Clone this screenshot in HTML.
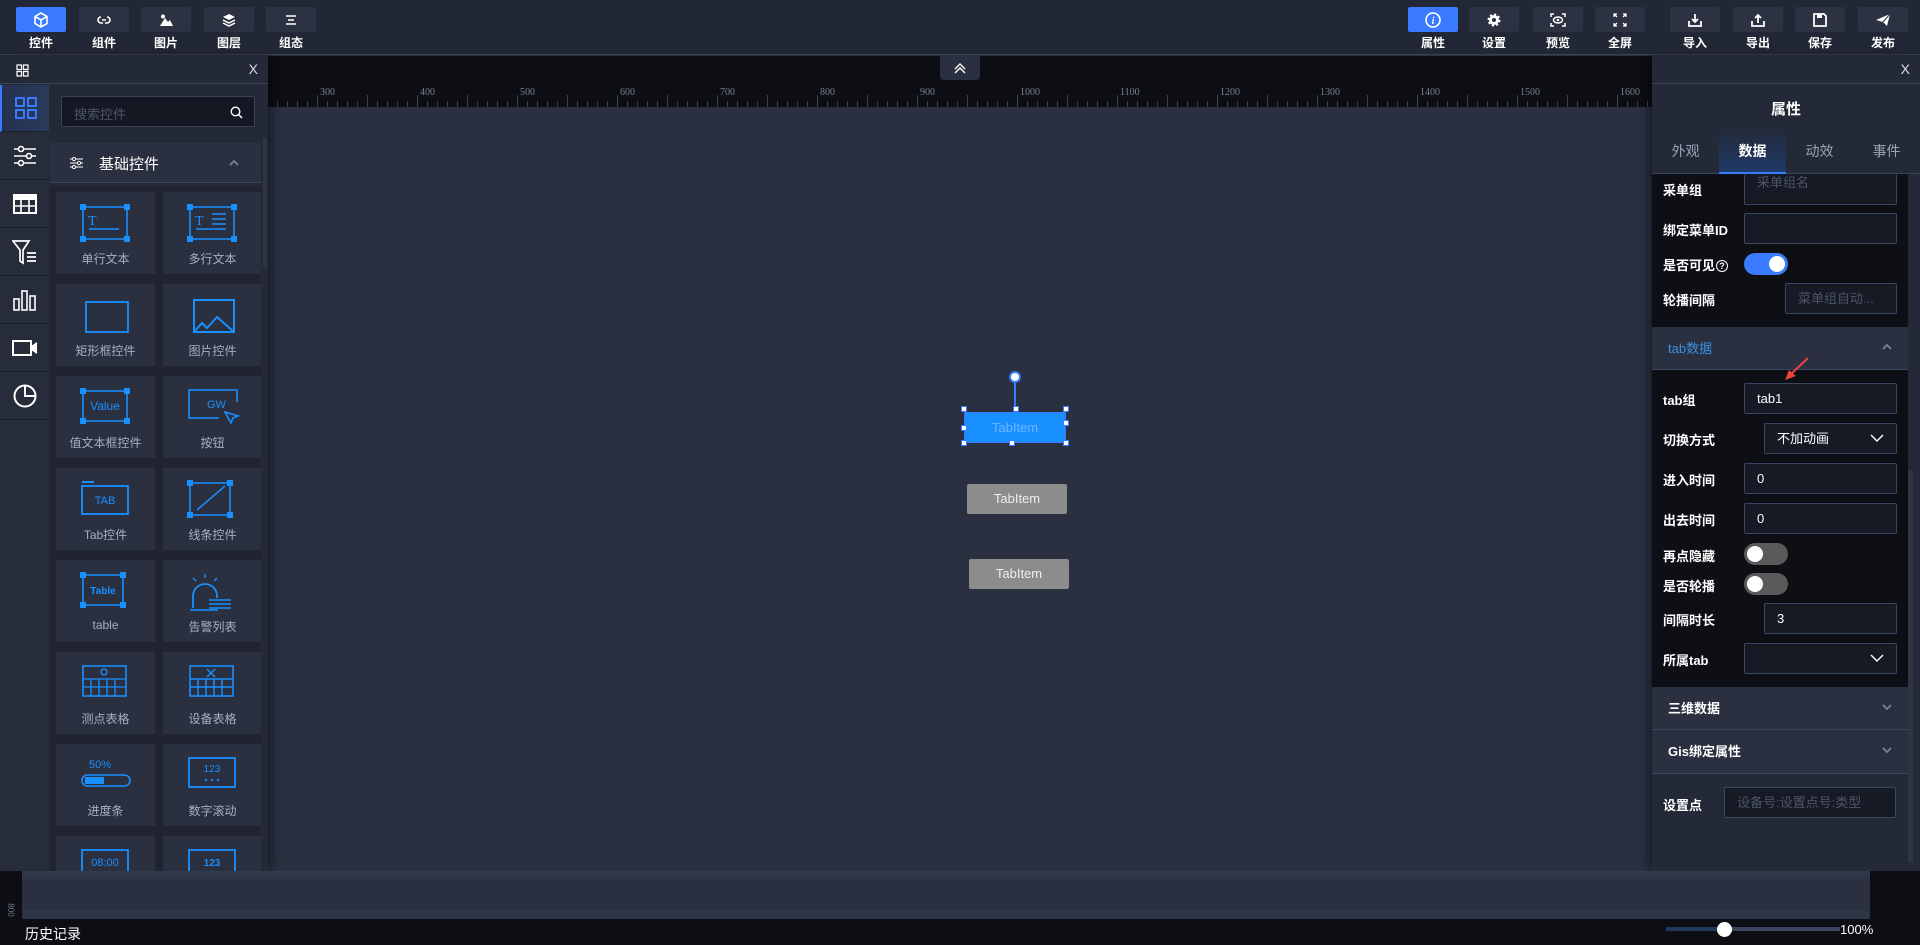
<!DOCTYPE html>
<html><head><meta charset="utf-8"><style>
*{box-sizing:border-box;margin:0;padding:0}
body{width:1920px;height:945px;overflow:hidden;background:#2a3040;font-family:"Liberation Sans","Noto Sans CJK SC",sans-serif;position:relative;color:#fff}
.abs{position:absolute}
#top{left:0;top:0;width:1920px;height:55px;background:#222735;border-bottom:1px solid #3a4358}
.tb{position:absolute;top:7px;width:50px;height:25px;background:#2c3241;border-radius:2px;display:flex;align-items:center;justify-content:center}
.tb.on{background:#3a7afe}
.tl{position:absolute;top:34px;width:50px;text-align:center;font-size:12px;font-weight:bold;color:#fff}
#ruler{left:268px;top:56px;width:1384px;height:51px;background:#0c0e13}
.rl{position:absolute;top:31px;font-family:"Liberation Serif",serif;font-size:10px;color:#7a8090}
#lp{left:0;top:56px;width:268px;height:815px;background:#232937;box-shadow:4px 0 8px rgba(0,0,0,.4)}
#rp{left:1652px;top:56px;width:268px;height:815px;background:#232937;box-shadow:-4px 0 8px rgba(0,0,0,.4)}
.card{position:absolute;width:99px;height:82px;background:#2a3040}
.card span{position:absolute;left:0;right:0;top:58px;text-align:center;font-size:12px;color:#a6afc0}
.card svg{position:absolute;left:24px;top:12px}
.ic{position:absolute;left:0;width:49px;height:47px;border-bottom:1px solid #1c2029;display:flex;align-items:center;justify-content:center}
.lab{position:absolute;left:1663px;font-size:13px;font-weight:bold;color:#fff}
.inp{position:absolute;height:31px;background:#161a24;border:1px solid #3a4660;border-radius:2px;font-size:13px;color:#fff;padding-left:12px;line-height:29px}
.ph{color:#4c5466}
.tg{position:absolute;width:44px;height:22px;border-radius:11px;background:#5a5a5a}
.tg i{position:absolute;top:3px;left:3px;width:16px;height:16px;border-radius:50%;background:#fff}
.tg.on{background:#3a7afe}.tg.on i{left:25px}
.sec{position:absolute;left:1652px;width:256px;height:43px;background:#2a3040;border-bottom:1px solid #3a4660;font-size:13px;font-weight:bold;padding-left:16px;line-height:43px}
.chev{position:absolute;right:16px;top:17px}
.h{position:absolute;width:6px;height:6px;background:#fff;border:1px solid #3a7afe}
</style></head><body>
<div id="top" class="abs">
 <div class="tb on" style="left:16px"><svg width="14" height="16" viewBox="0 0 14 16"><path d="M7 1L13 4.5V11.5L7 15L1 11.5V4.5Z M1 4.5L7 8L13 4.5 M7 8V15" fill="none" stroke="#fff" stroke-width="1.6"/></svg></div><div class="tl" style="left:16px">控件</div>
 <div class="tb" style="left:79px"><svg width="14" height="8"><path d="M4 1a3 3 0 100 6h2M10 1a3 3 0 110 6h-2M5 4h4" fill="none" stroke="#fff" stroke-width="1.6"/></svg></div><div class="tl" style="left:79px">组件</div>
 <div class="tb" style="left:141px"><svg width="14" height="12"><circle cx="4" cy="2.5" r="2" fill="#fff"/><path d="M1 12L6 4l3 4 2-2 3 6z" fill="#fff"/></svg></div><div class="tl" style="left:141px">图片</div>
 <div class="tb" style="left:204px"><svg width="14" height="14"><path d="M7 1l6 3-6 3-6-3z" fill="#fff"/><path d="M1 7l6 3 6-3M1 10l6 3 6-3" fill="none" stroke="#fff" stroke-width="1.5"/></svg></div><div class="tl" style="left:204px">图层</div>
 <div class="tb" style="left:266px"><svg width="12" height="10"><path d="M1 1h10M3 5h6M1 9h10" stroke="#fff" stroke-width="1.5"/></svg></div><div class="tl" style="left:266px">组态</div>

 <div class="tb on" style="left:1408px"><svg width="16" height="16"><circle cx="8" cy="8" r="7" fill="none" stroke="#fff" stroke-width="1.6"/><text x="8" y="12" font-size="10" font-style="italic" font-weight="bold" fill="#fff" text-anchor="middle" font-family="Liberation Serif">i</text></svg></div><div class="tl" style="left:1408px">属性</div>
 <div class="tb" style="left:1469px"><svg width="14" height="14"><circle cx="7" cy="7" r="5" fill="#fff" stroke="#fff" stroke-width="3" stroke-dasharray="2 1.9"/><circle cx="7" cy="7" r="2" fill="#2c3241"/></svg></div><div class="tl" style="left:1469px">设置</div>
 <div class="tb" style="left:1533px"><svg width="16" height="14"><path d="M1 4V1h3M12 1h3v3M15 10v3h-3M4 13H1v-3" fill="none" stroke="#fff" stroke-width="1.5"/><ellipse cx="8" cy="7" rx="4.5" ry="3" fill="none" stroke="#fff" stroke-width="1.4"/><circle cx="8" cy="7" r="1.3" fill="#fff"/></svg></div><div class="tl" style="left:1533px">预览</div>
 <div class="tb" style="left:1595px"><svg width="14" height="14"><path d="M1 4V1h3M1 1l3 3M10 1h3v3M13 1l-3 3M13 10v3h-3M13 13l-3-3M4 13H1v-3M1 13l3-3" fill="none" stroke="#fff" stroke-width="1.3"/></svg></div><div class="tl" style="left:1595px">全屏</div>
 <div class="tb" style="left:1670px"><svg width="14" height="14"><path d="M1 8v5h12V8M7 1v8M4 6l3 3 3-3" fill="none" stroke="#fff" stroke-width="1.8"/></svg></div><div class="tl" style="left:1670px">导入</div>
 <div class="tb" style="left:1733px"><svg width="14" height="14"><path d="M1 8v5h12V8M7 10V2M4 5l3-3 3 3" fill="none" stroke="#fff" stroke-width="1.8"/></svg></div><div class="tl" style="left:1733px">导出</div>
 <div class="tb" style="left:1795px"><svg width="14" height="14"><path d="M1 1h10l2 2v10H1z" fill="none" stroke="#fff" stroke-width="1.8"/><rect x="4" y="1" width="5" height="4" fill="#fff"/></svg></div><div class="tl" style="left:1795px">保存</div>
 <div class="tb" style="left:1858px"><svg width="16" height="14"><path d="M1 7L15 1 12 13 8 9z" fill="#fff"/><path d="M8 9L15 1" stroke="#2c3241" stroke-width="1"/></svg></div><div class="tl" style="left:1858px">发布</div>
</div>

<div id="ruler" class="abs">
 <div class="rl" style="left:52px">300</div><div class="rl" style="left:152px">400</div><div class="rl" style="left:252px">500</div><div class="rl" style="left:352px">600</div><div class="rl" style="left:452px">700</div><div class="rl" style="left:552px">800</div><div class="rl" style="left:652px">900</div><div class="rl" style="left:752px">1000</div><div class="rl" style="left:852px">1100</div><div class="rl" style="left:952px">1200</div><div class="rl" style="left:1052px">1300</div><div class="rl" style="left:1152px">1400</div><div class="rl" style="left:1252px">1500</div><div class="rl" style="left:1352px">1600</div>
 <div class="abs" style="left:0;bottom:0;width:1384px;height:6px;background:repeating-linear-gradient(90deg,transparent 0 9px,#3a404c 9px 10px)"></div>
 <div class="abs" style="left:0;bottom:0;width:1384px;height:12px;background:repeating-linear-gradient(90deg,transparent 0 49px,#3a404c 49px 50px)"></div>
 <div class="abs" style="left:672px;top:0;width:40px;height:24px;background:#2a3040;border-radius:0 0 4px 4px;text-align:center"><svg width="14" height="12" style="margin-top:6px"><path d="M2 7l5-5 5 5M2 11l5-5 5 5" fill="none" stroke="#fff" stroke-width="1.4"/></svg></div>
</div>

<!-- canvas items -->
<div class="abs" style="left:1014px;top:381px;width:2px;height:31px;background:#3a7afe"></div>
<div class="abs" style="left:1009px;top:371px;width:12px;height:12px;border-radius:50%;background:#fff;border:2px solid #3a7afe"></div>
<div class="abs" style="left:964px;top:412px;width:102px;height:31px;background:#1890ff;border:1px solid #3a7afe;text-align:center;line-height:29px;font-size:13px;color:#6fb6ff">TabItem</div>
<div class="h" style="left:961px;top:406px"></div><div class="h" style="left:1013px;top:406px"></div><div class="h" style="left:1063px;top:406px"></div>
<div class="h" style="left:961px;top:425px"></div><div class="h" style="left:1063px;top:420px"></div>
<div class="h" style="left:961px;top:440px"></div><div class="h" style="left:1009px;top:440px"></div><div class="h" style="left:1063px;top:440px"></div>
<div class="abs" style="left:967px;top:484px;width:100px;height:30px;background:#8c8c8c;border-radius:2px;text-align:center;line-height:30px;font-size:13px;color:#eee">TabItem</div>
<div class="abs" style="left:969px;top:559px;width:100px;height:30px;background:#8c8c8c;border-radius:2px;text-align:center;line-height:30px;font-size:13px;color:#eee">TabItem</div>

<!-- left panel -->
<div id="lp" class="abs">
 <div class="abs" style="left:0;top:0;width:268px;height:28px;border-bottom:1px solid #3a4358"><svg class="abs" style="left:16px;top:8px" width="13" height="13"><path d="M1 1h4.5v4.5H1zM7.5 1H12v4.5H7.5zM1 7.5h4.5V12H1zM7.5 7.5H12V12H7.5z" fill="none" stroke="#fff" stroke-width="1.2"/></svg><div class="abs" style="right:10px;top:5px;font-size:14px;color:#ddd">X</div></div>
 <div class="abs" style="left:0;top:29px;width:49px;height:786px;background:#262c3a">
  <div class="ic" style="top:0;background:linear-gradient(90deg,#24324e,#2a3a5a);border-left:2px solid #3a7afe"><svg width="24" height="24"><path d="M2 2h8v8H2zM14 2h8v8h-8zM2 14h8v8H2zM14 14h8v8h-8z" fill="none" stroke="#3a7afe" stroke-width="2" stroke-linejoin="round"/></svg></div>
  <div class="ic" style="top:48px"><svg width="24" height="22"><path d="M1 4h22M1 11h22M1 18h22" stroke="#fff" stroke-width="1.6"/><circle cx="8" cy="4" r="2.5" fill="#262c3a" stroke="#fff" stroke-width="1.6"/><circle cx="16" cy="11" r="2.5" fill="#262c3a" stroke="#fff" stroke-width="1.6"/><circle cx="8" cy="18" r="2.5" fill="#262c3a" stroke="#fff" stroke-width="1.6"/></svg></div>
  <div class="ic" style="top:96px"><svg width="24" height="20"><rect x="1" y="1" width="22" height="18" fill="none" stroke="#fff" stroke-width="2"/><rect x="1" y="1" width="22" height="5" fill="#fff"/><path d="M1 12h22M8 6v13M16 6v13" stroke="#fff" stroke-width="1.6"/></svg></div>
  <div class="ic" style="top:144px"><svg width="26" height="26"><path d="M1 2h16l-6 9v13l-3-2V11z" fill="none" stroke="#fff" stroke-width="1.7"/><path d="M15 14h9M15 18h9M15 22h9" stroke="#fff" stroke-width="1.7"/></svg></div>
  <div class="ic" style="top:192px"><svg width="24" height="22"><rect x="1" y="10" width="5" height="11" fill="none" stroke="#fff" stroke-width="1.6"/><rect x="9" y="2" width="5" height="19" fill="none" stroke="#fff" stroke-width="1.6"/><rect x="17" y="7" width="5" height="14" fill="none" stroke="#fff" stroke-width="1.6"/></svg></div>
  <div class="ic" style="top:240px"><svg width="26" height="18"><rect x="1" y="2" width="18" height="14" fill="none" stroke="#fff" stroke-width="2"/><path d="M19 7l6-4v12l-6-4z" fill="#fff"/></svg></div>
  <div class="ic" style="top:288px"><svg width="24" height="24"><circle cx="12" cy="12" r="10.5" fill="none" stroke="#fff" stroke-width="2"/><path d="M12 1.5V12h10.5" fill="none" stroke="#fff" stroke-width="2"/></svg></div>
 </div>
 <div class="abs" style="left:61px;top:40px;width:194px;height:31px;background:#141822;border:1px solid #3a4358;border-radius:2px;font-size:13px;color:#4c5466;padding:7px 0 0 12px">搜索控件<svg class="abs" style="right:11px;top:9px" width="13" height="13"><circle cx="5.5" cy="5.5" r="4.3" fill="none" stroke="#fff" stroke-width="1.4"/><path d="M8.5 8.5L12 12" stroke="#fff" stroke-width="1.5"/></svg></div>
 <div class="abs" style="left:50px;top:87px;width:211px;height:40px;background:#2a3040;border-bottom:1px solid #3a4660">
  <svg class="abs" style="left:20px;top:14px" width="13" height="12"><path d="M0 2h13M0 6h13M0 10h13" stroke="#fff" stroke-width="1.1"/><circle cx="4" cy="2" r="1.6" fill="#2a3040" stroke="#fff"/><circle cx="9" cy="6" r="1.6" fill="#2a3040" stroke="#fff"/><circle cx="4" cy="10" r="1.6" fill="#2a3040" stroke="#fff"/></svg>
  <div class="abs" style="left:49px;top:10px;font-size:15px;color:#fff">基础控件</div>
  <svg class="abs" style="right:22px;top:17px" width="10" height="6"><path d="M1 5l4-4 4 4" fill="none" stroke="#7a8295" stroke-width="1.8"/></svg>
 </div>
 <div class="abs" style="left:263px;top:82px;width:4px;height:130px;background:#2f3545;border-radius:2px"></div>
 <div class="abs" style="left:50px;top:130px;width:211px;height:685px;background:#1f2430;overflow:hidden">
  <div class="card" style="left:6px;top:6px"><svg width="50" height="38"><path d="M3 3h44v32H3z" fill="none" stroke="#1890ff" stroke-width="1.6"/><rect x="0" y="0" width="6" height="6" fill="#1890ff"/><rect x="44" y="0" width="6" height="6" fill="#1890ff"/><rect x="0" y="32" width="6" height="6" fill="#1890ff"/><rect x="44" y="32" width="6" height="6" fill="#1890ff"/><text x="8" y="21" font-size="14" fill="#1890ff" font-family="Liberation Serif">T</text><path d="M9 25h30" stroke="#1890ff" stroke-width="1.5"/></svg><span>单行文本</span></div>
  <div class="card" style="left:113px;top:6px"><svg width="50" height="38"><path d="M3 3h44v32H3z" fill="none" stroke="#1890ff" stroke-width="1.6"/><rect x="0" y="0" width="6" height="6" fill="#1890ff"/><rect x="44" y="0" width="6" height="6" fill="#1890ff"/><rect x="0" y="32" width="6" height="6" fill="#1890ff"/><rect x="44" y="32" width="6" height="6" fill="#1890ff"/><text x="8" y="21" font-size="14" fill="#1890ff" font-family="Liberation Serif">T</text><path d="M25 10h14M25 15h14M25 20h14M9 25h30" stroke="#1890ff" stroke-width="1.5"/></svg><span>多行文本</span></div>
  <div class="card" style="left:6px;top:98px"><svg width="50" height="38"><rect x="6" y="6" width="42" height="30" fill="none" stroke="#1890ff" stroke-width="1.8"/></svg><span>矩形框控件</span></div>
  <div class="card" style="left:113px;top:98px"><svg width="50" height="38"><rect x="7" y="4" width="40" height="32" fill="none" stroke="#1890ff" stroke-width="2"/><path d="M7 36l8-9 5 5 10-11 17 15" fill="none" stroke="#1890ff" stroke-width="2"/></svg><span>图片控件</span></div>
  <div class="card" style="left:6px;top:190px"><svg width="50" height="38"><path d="M3 3h44v30H3z" fill="none" stroke="#1890ff" stroke-width="1.6"/><rect x="0" y="0" width="6" height="6" fill="#1890ff"/><rect x="44" y="0" width="6" height="6" fill="#1890ff"/><rect x="0" y="30" width="6" height="6" fill="#1890ff"/><rect x="44" y="30" width="6" height="6" fill="#1890ff"/><text x="25" y="22" font-size="12" fill="#1890ff" text-anchor="middle">Value</text></svg><span>值文本框控件</span></div>
  <div class="card" style="left:113px;top:190px"><svg width="54" height="40"><path d="M50 14V2H2v28h30" fill="none" stroke="#1890ff" stroke-width="1.6"/><text x="20" y="20" font-size="11" fill="#1890ff">GW</text><path d="M38 24l13 4-5 2-2 5z" fill="none" stroke="#1890ff" stroke-width="1.6"/></svg><span>按钮</span></div>
  <div class="card" style="left:6px;top:282px"><svg width="50" height="38"><rect x="2" y="6" width="46" height="28" fill="none" stroke="#1890ff" stroke-width="1.8"/><path d="M2 2h12" stroke="#1890ff" stroke-width="2"/><text x="25" y="24" font-size="11" fill="#1890ff" text-anchor="middle">TAB</text></svg><span>Tab控件</span></div>
  <div class="card" style="left:113px;top:282px"><svg width="50" height="38"><path d="M3 3h40v32H3z" fill="none" stroke="#1890ff" stroke-width="1.6"/><rect x="0" y="0" width="6" height="6" fill="#1890ff"/><rect x="40" y="0" width="6" height="6" fill="#1890ff"/><rect x="0" y="32" width="6" height="6" fill="#1890ff"/><rect x="40" y="32" width="6" height="6" fill="#1890ff"/><path d="M10 30L38 6" stroke="#1890ff" stroke-width="1.5"/></svg><span>线条控件</span></div>
  <div class="card" style="left:6px;top:374px"><svg width="50" height="38"><path d="M3 3h40v30H3z" fill="none" stroke="#1890ff" stroke-width="1.6"/><rect x="0" y="0" width="6" height="6" fill="#1890ff"/><rect x="40" y="0" width="6" height="6" fill="#1890ff"/><rect x="0" y="30" width="6" height="6" fill="#1890ff"/><rect x="40" y="30" width="6" height="6" fill="#1890ff"/><text x="23" y="22" font-size="10" font-weight="bold" fill="#1890ff" text-anchor="middle">Table</text></svg><span>table</span></div>
  <div class="card" style="left:113px;top:374px"><svg width="50" height="40"><path d="M6 36V24a12 12 0 0124 0v2" fill="none" stroke="#1890ff" stroke-width="1.8"/><path d="M18 2v4M6 6l3 3M30 6l-3 3M3 38h28M22 28h22M22 32h22M22 36h22" stroke="#1890ff" stroke-width="1.4"/></svg><span>告警列表</span></div>
  <div class="card" style="left:6px;top:466px"><svg width="50" height="34"><rect x="3" y="2" width="43" height="30" fill="none" stroke="#1890ff" stroke-width="1.6"/><path d="M3 15h43M3 23h43M11 15v17M19 15v17M27 15v17M35 15v17" stroke="#1890ff" stroke-width="1.3"/><circle cx="24" cy="8" r="3" fill="none" stroke="#1890ff" stroke-width="1.3"/></svg><span>测点表格</span></div>
  <div class="card" style="left:113px;top:466px"><svg width="50" height="34"><rect x="3" y="2" width="43" height="30" fill="none" stroke="#1890ff" stroke-width="1.6"/><path d="M3 15h43M3 23h43M11 15v17M19 15v17M27 15v17M35 15v17M20 5l8 8M28 5l-8 8" stroke="#1890ff" stroke-width="1.5"/></svg><span>设备表格</span></div>
  <div class="card" style="left:6px;top:558px"><svg width="54" height="40"><text x="20" y="12" font-size="11" fill="#1890ff" text-anchor="middle">50%</text><rect x="2" y="19" width="48" height="11" rx="5.5" fill="none" stroke="#1890ff" stroke-width="1.6"/><path d="M5 21h19v7H5z" fill="#1890ff"/></svg><span>进度条</span></div>
  <div class="card" style="left:113px;top:558px"><svg width="50" height="34"><rect x="2" y="2" width="46" height="29" fill="none" stroke="#1890ff" stroke-width="1.8"/><text x="25" y="16" font-size="10" fill="#1890ff" text-anchor="middle">123</text><circle cx="19" cy="24" r="1.2" fill="#1890ff"/><circle cx="25" cy="24" r="1.2" fill="#1890ff"/><circle cx="31" cy="24" r="1.2" fill="#1890ff"/></svg><span>数字滚动</span></div>
  <div class="card" style="left:6px;top:650px"><svg width="50" height="34"><rect x="2" y="2" width="46" height="29" fill="none" stroke="#1890ff" stroke-width="1.8"/><text x="25" y="18" font-size="11" fill="#1890ff" text-anchor="middle">08:00</text></svg></div>
  <div class="card" style="left:113px;top:650px"><svg width="50" height="34"><rect x="2" y="2" width="46" height="29" fill="none" stroke="#1890ff" stroke-width="1.8"/><text x="25" y="18" font-size="10" font-weight="bold" fill="#1890ff" text-anchor="middle">123</text></svg></div>
 </div>
</div>

<!-- right panel -->
<div id="rp" class="abs">
 <div class="abs" style="left:0;top:0;width:268px;height:28px;border-bottom:1px solid #3a4358"><div class="abs" style="right:10px;top:5px;font-size:14px;color:#ddd">X</div></div>
 <div class="abs" style="left:0;top:32px;width:268px;height:43px;text-align:center;font-size:15px;font-weight:bold;line-height:43px">属性</div>
 <div class="abs" style="left:0;top:71px;width:268px;height:47px;background:#232937;border-bottom:1px solid #3a4660;font-size:14px;color:#9aa3b4">
  <div class="abs" style="left:0;width:67px;text-align:center;line-height:48px">外观</div>
  <div class="abs" style="left:67px;width:67px;height:47px;text-align:center;line-height:48px;color:#fff;font-weight:bold;background:linear-gradient(180deg,#232937,#1e3a68);border-bottom:2px solid #3a7afe">数据</div>
  <div class="abs" style="left:134px;width:67px;text-align:center;line-height:48px">动效</div>
  <div class="abs" style="left:201px;width:67px;text-align:center;line-height:48px">事件</div>
 </div>
</div>
<div class="abs" style="left:1652px;top:174px;width:256px;height:153px;background:#0d0f15"></div>
<div class="abs" style="left:1652px;top:370px;width:256px;height:317px;background:#0d0f15"></div>
<div class="abs" style="left:1908px;top:470px;width:5px;height:393px;background:#2f3545;border-radius:2px"></div>
<div class="lab" style="top:180px">采单组</div><div class="inp ph" style="left:1744px;top:174px;width:153px;height:31px;border-top:none;line-height:18px">采单组名</div>
<div class="lab" style="top:220px">绑定菜单ID</div><div class="inp" style="left:1744px;top:213px;width:153px"></div>
<div class="lab" style="top:255px">是否可见<span style="display:inline-block;width:12px;height:12px;border:1px solid #fff;border-radius:50%;font-size:9px;text-align:center;line-height:11px;margin-left:1px;vertical-align:1px">?</span></div><div class="tg on" style="left:1744px;top:253px"><i></i></div>
<div class="lab" style="top:290px">轮播间隔</div><div class="inp ph" style="left:1785px;top:283px;width:112px">菜单组自动...</div>
<div class="sec" style="top:327px;color:#3b8fe0;font-weight:normal">tab数据<svg class="chev" width="10" height="6"><path d="M1 5l4-4 4 4" fill="none" stroke="#7a8295" stroke-width="1.8"/></svg></div>
<svg class="abs" style="left:1782px;top:356px" width="28" height="26"><path d="M26 2L8 19" stroke="#e8453c" stroke-width="2"/><path d="M3 24l4-10 7 6z" fill="#e8453c"/></svg>
<div class="lab" style="top:390px">tab组</div><div class="inp" style="left:1744px;top:383px;width:153px">tab1</div>
<div class="lab" style="top:430px">切换方式</div><div class="inp" style="left:1764px;top:423px;width:133px">不加动画<svg class="abs" style="right:12px;top:10px" width="14" height="9"><path d="M1 1l6 6 6-6" fill="none" stroke="#fff" stroke-width="1.4"/></svg></div>
<div class="lab" style="top:470px">进入时间</div><div class="inp" style="left:1744px;top:463px;width:153px">0</div>
<div class="lab" style="top:510px">出去时间</div><div class="inp" style="left:1744px;top:503px;width:153px">0</div>
<div class="lab" style="top:546px">再点隐藏</div><div class="tg" style="left:1744px;top:543px"><i></i></div>
<div class="lab" style="top:576px">是否轮播</div><div class="tg" style="left:1744px;top:573px"><i></i></div>
<div class="lab" style="top:610px">间隔时长</div><div class="inp" style="left:1764px;top:603px;width:133px">3</div>
<div class="lab" style="top:650px">所属tab</div><div class="inp" style="left:1744px;top:643px;width:153px"><svg class="abs" style="right:12px;top:10px" width="14" height="9"><path d="M1 1l6 6 6-6" fill="none" stroke="#fff" stroke-width="1.4"/></svg></div>
<div class="sec" style="top:687px">三维数据<svg class="chev" width="10" height="6"><path d="M1 1l4 4 4-4" fill="none" stroke="#7a8295" stroke-width="1.8"/></svg></div>
<div class="sec" style="top:730px;height:44px">Gis绑定属性<svg class="chev" width="10" height="6"><path d="M1 1l4 4 4-4" fill="none" stroke="#7a8295" stroke-width="1.8"/></svg></div>
<div class="lab" style="top:795px">设置点</div><div class="inp ph" style="left:1724px;top:787px;width:172px">设备号:设置点号:类型</div>

<!-- bottom -->
<div class="abs" style="left:0;top:871px;width:22px;height:74px;background:#0c0e13"></div>
<div class="abs" style="left:1870px;top:871px;width:50px;height:48px;background:#0c0e13"></div>
<div class="abs" style="left:22px;top:871px;width:1848px;height:10px;background:linear-gradient(#343b4d,#2a3040)"></div>
<div class="abs" style="left:4px;top:905px;font-family:'Liberation Serif',serif;font-size:9px;color:#7a8090;transform:rotate(90deg)">800</div>
<div class="abs" style="left:22px;top:910px;width:1848px;height:9px;background:#2e3546;border-radius:4px"></div>
<div class="abs" style="left:0;top:919px;width:1920px;height:26px;background:#0c0e13"></div>
<div class="abs" style="left:25px;top:924px;font-size:14px;color:#fff">历史记录</div>
<div class="abs" style="left:1666px;top:927px;width:174px;height:4px;background:#3a4560"></div>
<div class="abs" style="left:1666px;top:927px;width:58px;height:4px;background:#1f3a5c"></div>
<div class="abs" style="left:1717px;top:922px;width:15px;height:15px;border-radius:50%;background:#fff"></div>
<div class="abs" style="left:1840px;top:922px;font-size:13px;color:#fff">100%</div>
</body></html>
